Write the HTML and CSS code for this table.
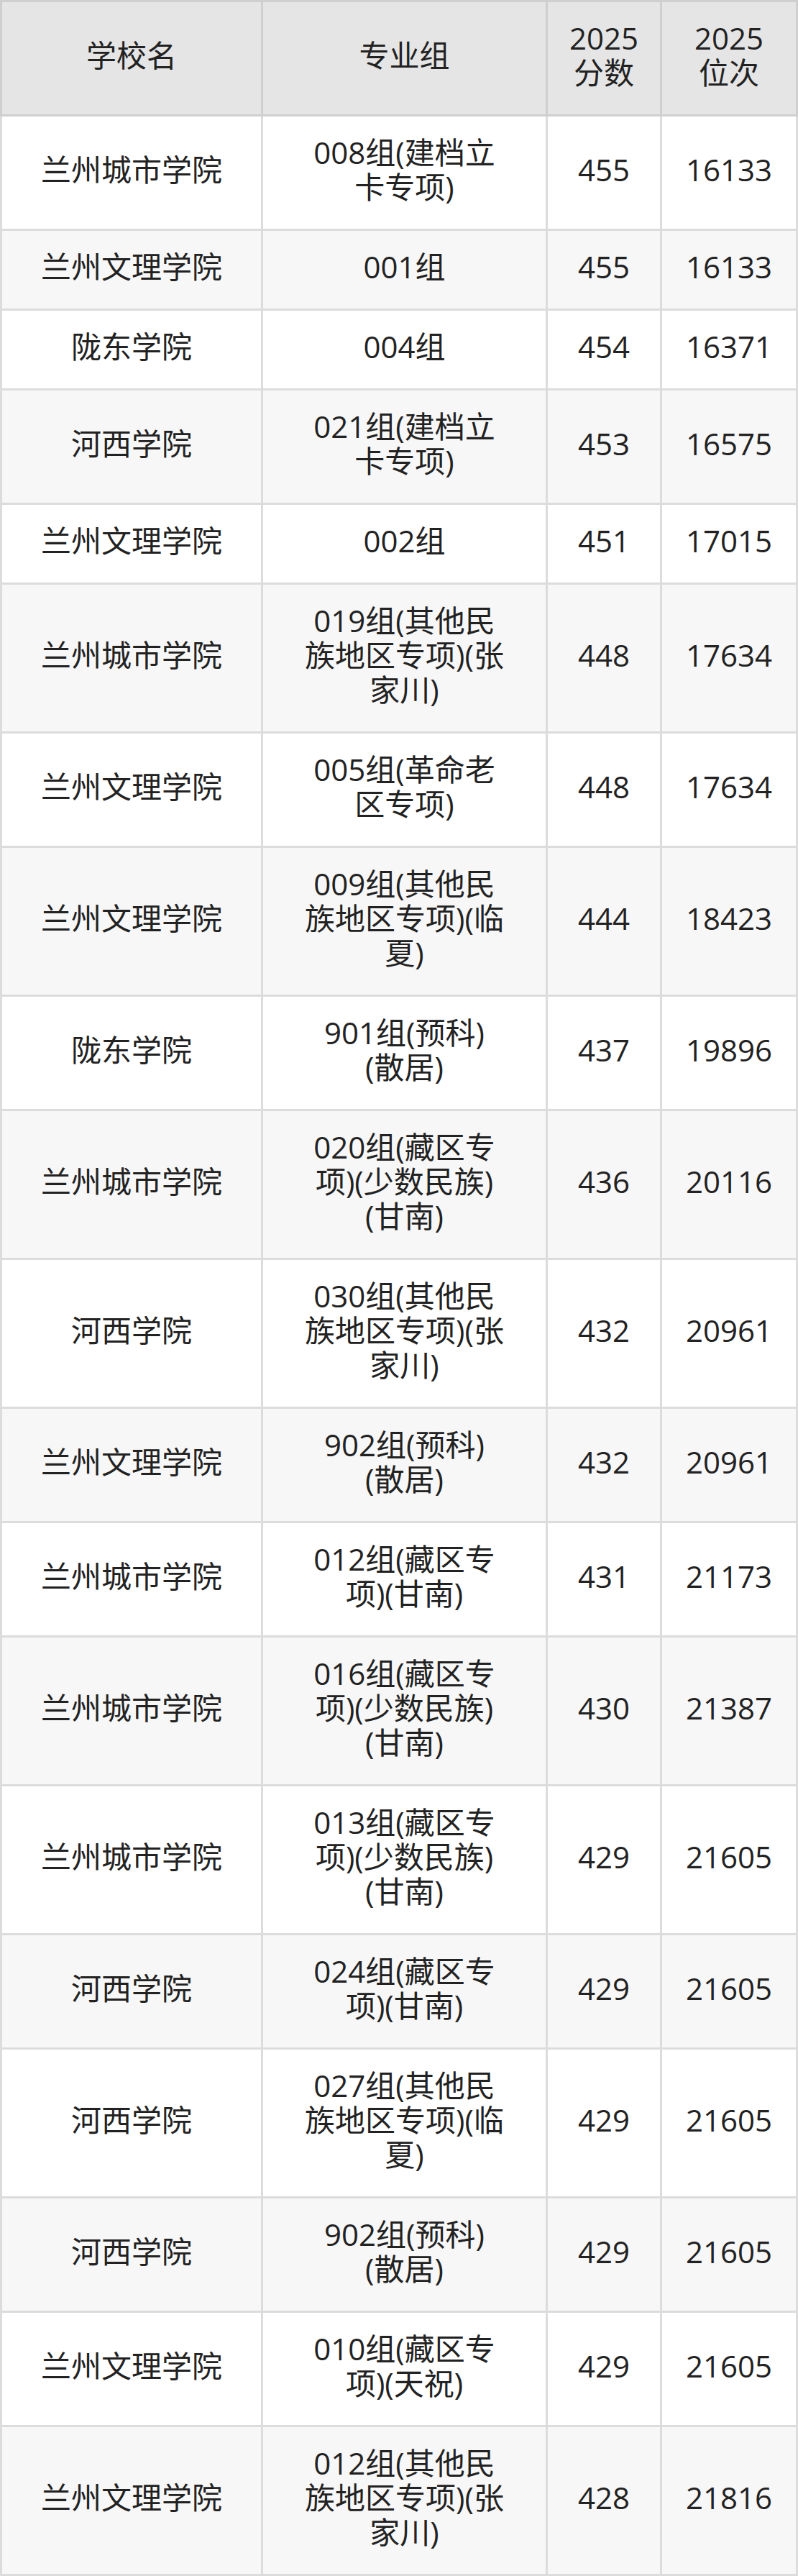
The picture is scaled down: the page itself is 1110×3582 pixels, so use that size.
FILE: index.html
```html
<!DOCTYPE html>
<html lang="zh-CN">
<head>
<meta charset="utf-8">
<title>2025 分数位次</title>
<link rel="stylesheet" href="styles.css">
</head>
<body>
<table class="score-table">
  <colgroup>
    <col class="col-school">
    <col class="col-group">
    <col class="col-score">
    <col class="col-rank">
  </colgroup>
  <thead>
    <tr>
      <th>学校名</th>
      <th>专业组</th>
      <th>2025<br>分数</th>
      <th>2025<br>位次</th>
    </tr>
  </thead>
  <tbody>
    <tr><td>兰州城市学院</td><td>008组(建档立<br>卡专项)</td><td>455</td><td>16133</td></tr>
    <tr><td>兰州文理学院</td><td>001组</td><td>455</td><td>16133</td></tr>
    <tr><td>陇东学院</td><td>004组</td><td>454</td><td>16371</td></tr>
    <tr><td>河西学院</td><td>021组(建档立<br>卡专项)</td><td>453</td><td>16575</td></tr>
    <tr><td>兰州文理学院</td><td>002组</td><td>451</td><td>17015</td></tr>
    <tr><td>兰州城市学院</td><td>019组(其他民<br>族地区专项)(张<br>家川)</td><td>448</td><td>17634</td></tr>
    <tr><td>兰州文理学院</td><td>005组(革命老<br>区专项)</td><td>448</td><td>17634</td></tr>
    <tr><td>兰州文理学院</td><td>009组(其他民<br>族地区专项)(临<br>夏)</td><td>444</td><td>18423</td></tr>
    <tr><td>陇东学院</td><td>901组(预科)<br>(散居)</td><td>437</td><td>19896</td></tr>
    <tr><td>兰州城市学院</td><td>020组(藏区专<br>项)(少数民族)<br>(甘南)</td><td>436</td><td>20116</td></tr>
    <tr><td>河西学院</td><td>030组(其他民<br>族地区专项)(张<br>家川)</td><td>432</td><td>20961</td></tr>
    <tr><td>兰州文理学院</td><td>902组(预科)<br>(散居)</td><td>432</td><td>20961</td></tr>
    <tr><td>兰州城市学院</td><td>012组(藏区专<br>项)(甘南)</td><td>431</td><td>21173</td></tr>
    <tr><td>兰州城市学院</td><td>016组(藏区专<br>项)(少数民族)<br>(甘南)</td><td>430</td><td>21387</td></tr>
    <tr><td>兰州城市学院</td><td>013组(藏区专<br>项)(少数民族)<br>(甘南)</td><td>429</td><td>21605</td></tr>
    <tr><td>河西学院</td><td>024组(藏区专<br>项)(甘南)</td><td>429</td><td>21605</td></tr>
    <tr><td>河西学院</td><td>027组(其他民<br>族地区专项)(临<br>夏)</td><td>429</td><td>21605</td></tr>
    <tr><td>河西学院</td><td>902组(预科)<br>(散居)</td><td>429</td><td>21605</td></tr>
    <tr><td>兰州文理学院</td><td>010组(藏区专<br>项)(天祝)</td><td>429</td><td>21605</td></tr>
    <tr><td>兰州文理学院</td><td>012组(其他民<br>族地区专项)(张<br>家川)</td><td>428</td><td>21816</td></tr>
  </tbody>
</table>
</body>
</html>
```

FILE: styles.css
```css
html, body {
  margin: 0;
  padding: 0;
  background: #ffffff;
}

body {
  font-family: "Open Sans", "Noto Sans CJK SC", sans-serif;
  color: #222222;
}

.score-table {
  width: 1110px;
  table-layout: fixed;
  border-collapse: collapse;
  font-size: 42px;
  line-height: 48px;
}

.col-school { width: 363px; }
.col-group  { width: 396px; }
.col-score  { width: 159px; }
.col-rank   { width: 189px; }

.score-table th,
.score-table td {
  padding: 26px 8px 34px;
  text-align: center;
  vertical-align: middle;
  white-space: nowrap;
}

.score-table th {
  font-weight: 400;
  background: #e5e5e5;
  border: 3px solid #cfcfcf;
}

.score-table td {
  border: 3px solid #dcdcdc;
}

.score-table tbody tr:nth-child(odd) td {
  background: #ffffff;
}

.score-table tbody tr:nth-child(even) td {
  background: #f7f7f7;
}
```
